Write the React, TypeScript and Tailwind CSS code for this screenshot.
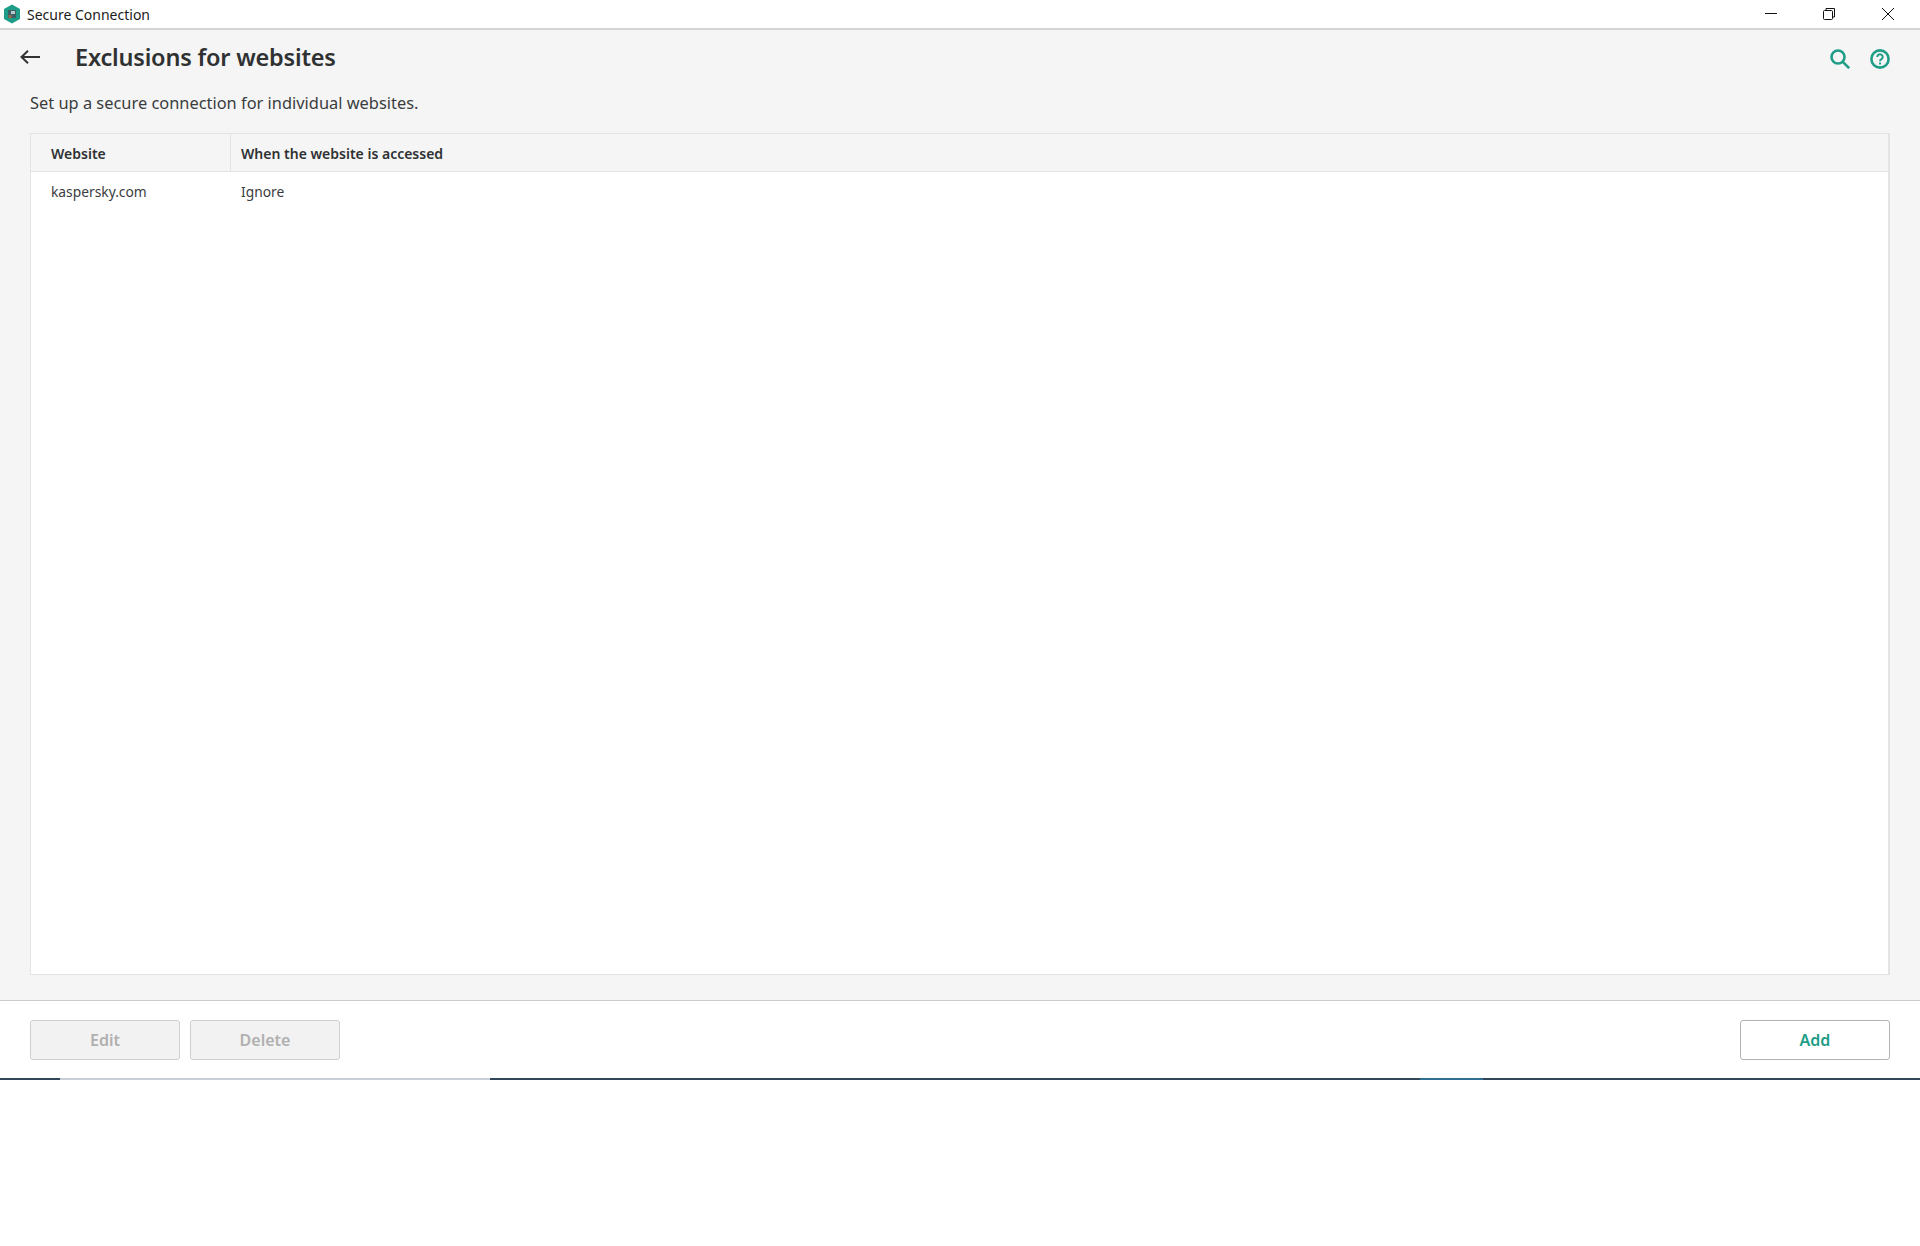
const font = "font-['Noto_Sans',sans-serif]";

function AppLogo() {
  return (
    <svg width="18" height="20" viewBox="0 0 18 20" className="shrink-0">
      <path d="M9 0.5 L17 5 V15 L9 19.5 L1 15 V5 Z" fill="#1d9d87" />
      <rect x="5" y="6" width="8" height="8" fill="#3f5f66" />
      <rect x="8" y="7" width="4" height="3" fill="#b9c9cc" />
      <rect x="5.5" y="11" width="3" height="3" fill="#9a6a4a" />
    </svg>
  );
}

function WindowControls() {
  return (
    <div className="flex items-center h-full mr-[3px]">
      <div className="w-[56px] flex justify-center">
        <svg width="14" height="14" viewBox="0 0 14 14" fill="none" stroke="#111">
          <path d="M1 6.5H13" />
        </svg>
      </div>
      <div className="w-[60px] flex justify-center">
        <svg width="14" height="14" viewBox="0 0 14 14" fill="none" stroke="#111">
          <rect x="1.5" y="3.5" width="9" height="9" rx="1" />
          <path d="M4 3V1.5H12.5V10H11" />
        </svg>
      </div>
      <div className="w-[58px] flex justify-center">
        <svg width="14" height="14" viewBox="0 0 14 14" fill="none" stroke="#111">
          <path d="M1 1L13 13M13 1L1 13" />
        </svg>
      </div>
    </div>
  );
}

function ActionButton({ label, disabled }: { label: string; disabled?: boolean }) {
  return (
    <button
      className={
        disabled
          ? "w-[150px] h-10 rounded-[3px] border border-[#cfcfcf] bg-[#f2f2f2] text-[#b0b0b0] text-[16px] font-semibold"
          : "w-[150px] h-10 rounded-[3px] border border-[#b3b3b3] bg-white text-[#1f9d87] text-[16px] font-semibold"
      }
    >
      {label}
    </button>
  );
}

export default function App() {
  return (
    <div className={`${font} w-full h-[1246px] bg-white text-[#2f3133]`}>
      {/* Title bar */}
      <div className="h-[30px] flex items-center justify-between bg-white border-b-2 border-[#d4d4d4]">
        <div className="flex items-center gap-[6px] pl-[3px]">
          <AppLogo />
          <span className="text-[14px] text-[#1c1c1c]">Secure Connection</span>
        </div>
        <WindowControls />
      </div>

      {/* Main */}
      <div className="h-[971px] bg-[#f5f5f5] border-b border-[#cbcbcb] flex flex-col px-[30px]">
        <div className="h-[54px] flex items-center justify-between">
          <div className="flex items-center gap-[35px] -ml-[10px]">
            <svg width="20" height="14" viewBox="0 0 20 14" fill="none" stroke="#333" strokeWidth="2">
              <path d="M20 7H1.5M8 0.8L1.5 7L8 13.2" />
            </svg>
            <h1 className="text-[23.5px] leading-8 font-semibold tracking-[-0.2px]">Exclusions for websites</h1>
          </div>
          <div className="flex items-center gap-5 mt-1">
            <svg width="20" height="20" viewBox="0 0 20 20" fill="none" stroke="#1f9d87" strokeWidth="2.6">
              <circle cx="8" cy="8" r="6.5" />
              <path d="M12.8 12.8L19.2 19.2" />
            </svg>
            <svg width="20" height="20" viewBox="0 0 20 20" fill="none" stroke="#1f9d87" strokeWidth="2.6">
              <circle cx="10" cy="10" r="8.6" />
              <path d="M7.3 8a2.7 2.7 0 1 1 4.2 2.2c-1 .6-1.5 1-1.5 2" strokeWidth="2" />
              <path d="M10 13.4v2" strokeWidth="2" />
            </svg>
          </div>
        </div>

        <p className="text-[16.4px] leading-6 text-[#3a3c3e] mt-[7px]">Set up a secure connection for individual websites.</p>

        <div className="mt-[18px] h-[842px] flex flex-col bg-white border border-[#e3e3e3] border-r-2">
          <div className="h-[38px] flex items-center bg-[#f5f5f5] border-b border-[#e3e3e3] text-[14px] font-semibold">
            <div className="w-[200px] h-full flex items-center pl-5 pt-[2px] border-r border-[#e3e3e3]">Website</div>
            <div className="pl-[10px] pt-[2px]">When the website is accessed</div>
          </div>
          <div className="h-[38px] flex items-center pt-[2px] text-[13.8px] text-[#3a3c3e]">
            <div className="w-[200px] pl-5">kaspersky.com</div>
            <div className="pl-[10px]">Ignore</div>
          </div>
        </div>
      </div>

      {/* Footer */}
      <div className="h-[77px] px-[30px] pt-[19px] bg-white flex justify-between items-start">
        <div className="flex gap-[10px]">
          <ActionButton label="Edit" disabled />
          <ActionButton label="Delete" disabled />
        </div>
        <ActionButton label="Add" />
      </div>
      {/* Bottom edge line, broken by a lighter stretch */}
      <div className="h-[2px] flex">
        <div className="w-[60px] bg-[#33475a]" />
        <div className="w-[430px] bg-[#c8ced6]" />
        <div className="w-[930px] bg-[#33475a]" />
        <div className="w-[63px] bg-[#2f6f8f]" />
        <div className="flex-1 bg-[#33475a]" />
      </div>
    </div>
  );
}
